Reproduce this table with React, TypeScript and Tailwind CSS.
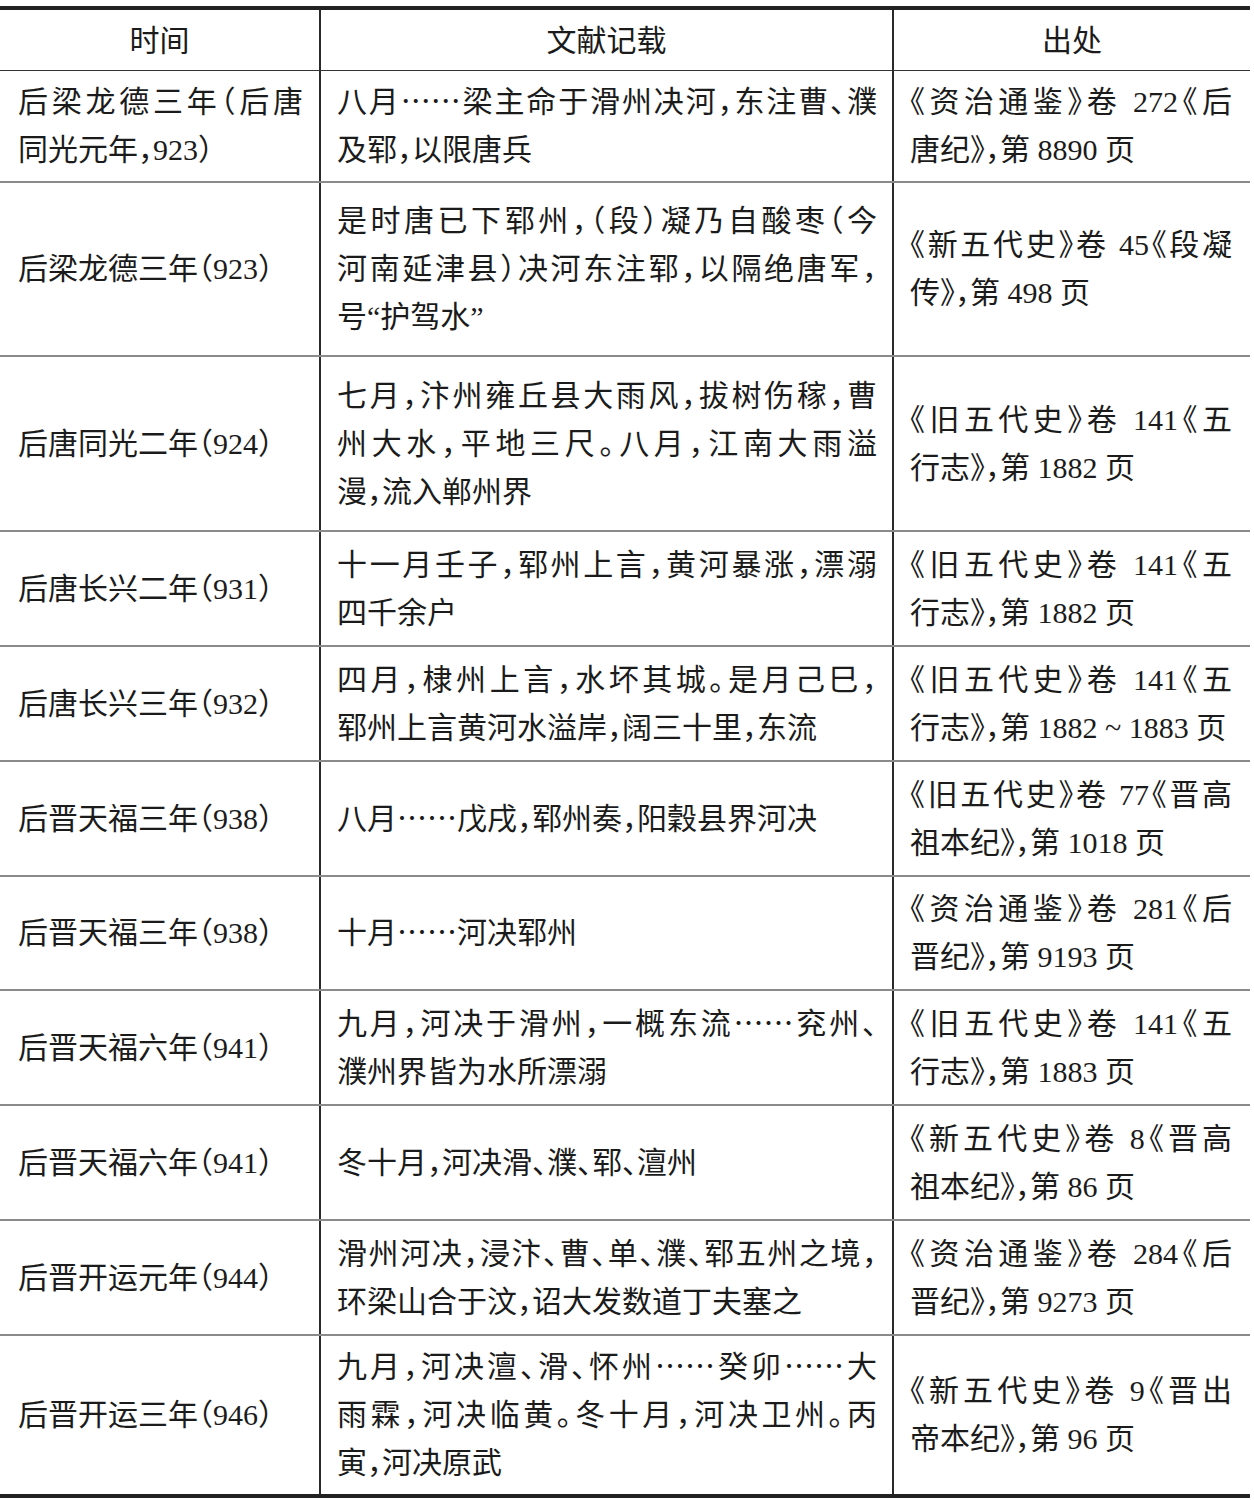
import React from "react";

type Row = { h: string; c1: string[]; c2: string[]; c3: string[] };

const rows: Row[] = [
  {
    h: "h-[112px]",
    c1: ["后梁龙德三年（后唐", "同光元年，923）"],
    c2: ["八月⋯⋯梁主命于滑州决河，东注曹、濮", "及郓，以限唐兵"],
    c3: ["《资治通鉴》卷 272《后", "唐纪》，第 8890 页"],
  },
  {
    h: "h-[174px]",
    c1: ["后梁龙德三年（923）"],
    c2: ["是时唐已下郓州，（段）凝乃自酸枣（今", "河南延津县）决河东注郓，以隔绝唐军，", "号“护驾水”"],
    c3: ["《新五代史》卷 45《段凝", "传》，第 498 页"],
  },
  {
    h: "h-[175px]",
    c1: ["后唐同光二年（924）"],
    c2: ["七月，汴州雍丘县大雨风，拔树伤稼，曹", "州大水，平地三尺。八月，江南大雨溢", "漫，流入郸州界"],
    c3: ["《旧五代史》卷 141《五", "行志》，第 1882 页"],
  },
  {
    h: "h-[115px]",
    c1: ["后唐长兴二年（931）"],
    c2: ["十一月壬子，郓州上言，黄河暴涨，漂溺", "四千余户"],
    c3: ["《旧五代史》卷 141《五", "行志》，第 1882 页"],
  },
  {
    h: "h-[115px]",
    c1: ["后唐长兴三年（932）"],
    c2: ["四月，棣州上言，水坏其城。是月己巳，", "郓州上言黄河水溢岸，阔三十里，东流"],
    c3: ["《旧五代史》卷 141《五", "行志》，第 1882 ~ 1883 页"],
  },
  {
    h: "h-[115px]",
    c1: ["后晋天福三年（938）"],
    c2: ["八月⋯⋯戊戌，郓州奏，阳穀县界河决"],
    c3: ["《旧五代史》卷 77《晋高", "祖本纪》，第 1018 页"],
  },
  {
    h: "h-[114px]",
    c1: ["后晋天福三年（938）"],
    c2: ["十月⋯⋯河决郓州"],
    c3: ["《资治通鉴》卷 281《后", "晋纪》，第 9193 页"],
  },
  {
    h: "h-[115px]",
    c1: ["后晋天福六年（941）"],
    c2: ["九月，河决于滑州，一概东流⋯⋯兖州、", "濮州界皆为水所漂溺"],
    c3: ["《旧五代史》卷 141《五", "行志》，第 1883 页"],
  },
  {
    h: "h-[115px]",
    c1: ["后晋天福六年（941）"],
    c2: ["冬十月，河决滑、濮、郓、澶州"],
    c3: ["《新五代史》卷 8《晋高", "祖本纪》，第 86 页"],
  },
  {
    h: "h-[115px]",
    c1: ["后晋开运元年（944）"],
    c2: ["滑州河决，浸汴、曹、单、濮、郓五州之境，", "环梁山合于汶，诏大发数道丁夫塞之"],
    c3: ["《资治通鉴》卷 284《后", "晋纪》，第 9273 页"],
  },
  {
    h: "h-[158px]",
    c1: ["后晋开运三年（946）"],
    c2: ["九月，河决澶、滑、怀州⋯⋯癸卯⋯⋯大", "雨霖，河决临黄。冬十月，河决卫州。丙", "寅，河决原武"],
    c3: ["《新五代史》卷 9《晋出", "帝本纪》，第 96 页"],
  },
];

function Lines({ lines }: { lines: string[] }) {
  return (
    <>
      {lines.map((t, i) => (
        <div
          key={i}
          className={
            i < lines.length - 1
              ? "h-[48px] leading-[48px] [text-align-last:justify]"
              : "h-[48px] leading-[48px] whitespace-nowrap"
          }
        >
          {t}
        </div>
      ))}
    </>
  );
}

export default function App() {
  return (
    <div className="w-[1254px] min-h-[1500px] bg-white pt-[6px] text-[#1b1b1b] font-['Liberation_Serif','Noto_Sans_CJK_SC',serif] text-[30px] [font-feature-settings:'halt']">
      <div className="w-[1250px] border-t-4 border-b-4 border-[#222]">
        <div className="grid grid-cols-[321px_573px_356px] h-[61px] border-b border-[#333]">
          <div className="flex items-center justify-center border-r-2 border-[#2a2a2a]">时间</div>
          <div className="flex items-center justify-center border-r-2 border-[#2a2a2a]">文献记载</div>
          <div className="flex items-center justify-center">出处</div>
        </div>
        {rows.map((r, i) => (
          <div
            key={i}
            className={
              "grid grid-cols-[321px_573px_356px] " +
              r.h +
              (i < rows.length - 1 ? " border-b-2 border-[#8a8a8a]" : "")
            }
          >
            <div className="flex flex-col justify-center pl-[18px] pr-[16px] border-r-2 border-[#2a2a2a]">
              <Lines lines={r.c1} />
            </div>
            <div className="flex flex-col justify-center pl-[16px] pr-[15px] border-r-2 border-[#2a2a2a]">
              <Lines lines={r.c2} />
            </div>
            <div className="flex flex-col justify-center pl-[16px] pr-[18px]">
              <Lines lines={r.c3} />
            </div>
          </div>
        ))}
      </div>
    </div>
  );
}
